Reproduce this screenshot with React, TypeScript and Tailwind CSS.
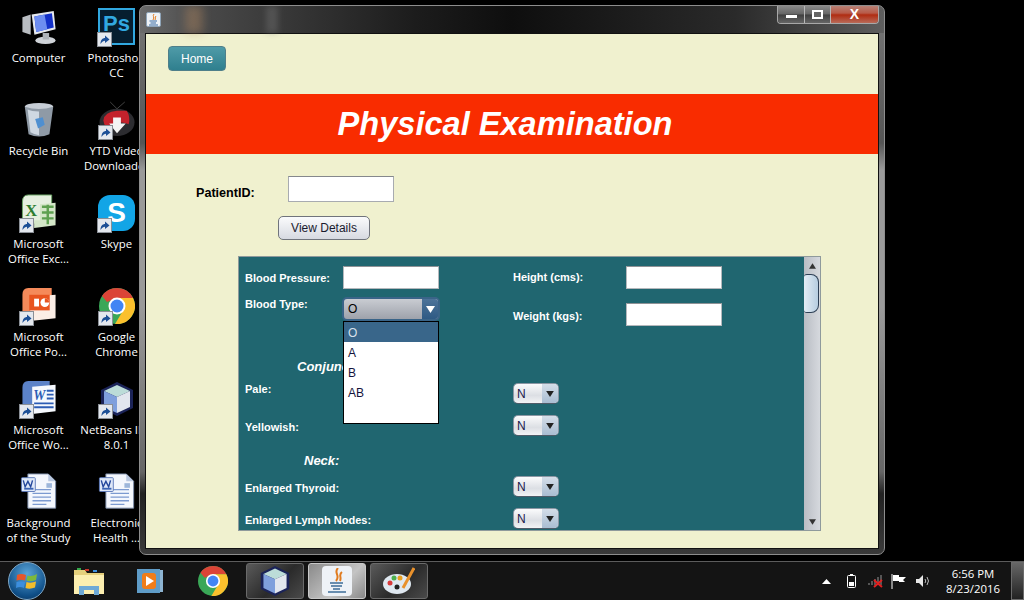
import type { ReactNode } from "react";

const sans = "font-['Open_Sans',sans-serif]";
const arial = "font-['Liberation_Sans',Arial,sans-serif]";

function ShortcutArrow() {
  return (
    <span className="absolute left-[-1px] bottom-[-2px] flex h-[15px] w-[15px] items-center justify-center border border-[#8a8f96] bg-[#e4e8ee]">
      <svg width="11" height="11" viewBox="0 0 11 11">
        <path d="M1.5 10 C1.5 6 3.5 4 6 4 V1.5 L10.5 5.5 L6 9 V6.8 C4.5 6.8 3 7.8 1.5 10 Z" fill="#1c4f96" />
      </svg>
    </span>
  );
}

function ChromeIcon({ size = 36 }: { size?: number }) {
  return (
    <svg width={size} height={size} viewBox="0 0 36 36">
      <circle cx="18" cy="18" r="18" fill="#3aa757" />
      <path d="M18 0 A18 18 0 0 1 34 10 L18 10 L8 14 L3 8 A18 18 0 0 1 18 0 Z" fill="#db4437" />
      <path d="M34 10 A18 18 0 0 1 16 36 L25 21 L18 10 Z" fill="#fbc02d" />
      <circle cx="18" cy="18" r="8.5" fill="#fff" />
      <circle cx="18" cy="18" r="6.5" fill="#4285f4" />
    </svg>
  );
}

function CubeIcon({ size = 36 }: { size?: number }) {
  return (
    <svg width={size} height={size} viewBox="0 0 36 36">
      <path d="M18 1 L34 9 V27 L18 35 L2 27 V9 Z" fill="#1b2358" />
      <path d="M18 4 L31 10 L18 16 L5 10 Z" fill="#bcdcd8" />
      <path d="M5 10 L18 16 V32 L5 26 Z" fill="#7f9fdc" />
      <path d="M31 10 L18 16 V32 L31 26 Z" fill="#e2e6ee" />
    </svg>
  );
}

function WordDoc() {
  return (
    <svg width="38" height="37" viewBox="0 0 40 40">
      <path d="M8 1 H30 L38 9 V38 H8 Z" fill="#f4f7fd" stroke="#7b8ba8" />
      <path d="M30 1 V9 H38 Z" fill="#b9c8e0" />
      <path d="M13 18 H33 M13 22 H33 M13 26 H33 M13 30 H33 M13 34 H28" stroke="#7c9ad0" strokeWidth="1.4" />
      <rect x="28" y="11" width="6" height="5" fill="#9db6da" />
      <rect x="1" y="5" width="15" height="15" rx="1" fill="#dfe8f8" stroke="#5b78b8" />
      <path d="M3 8 L5 15 L8 9 L11 15 L13 8" fill="none" stroke="#24479c" strokeWidth="1.5" />
      <rect x="4" y="16" width="10" height="2" fill="#3c64b4" />
    </svg>
  );
}

const desktopIcons: { lines: string[]; icon: ReactNode; shortcut?: boolean }[] = [
  {
    lines: ["Computer"],
    icon: (
      <svg width="38" height="35" viewBox="0 0 40 38">
        <path d="M2 8 L11 5 V27 L2 24 Z" fill="#b9bdc2" />
        <path d="M12 5 L36 1 L38 21 L15 27 Z" fill="#e6e9ee" />
        <path d="M15 7 L34 3.5 L36 19 L17 24 Z" fill="#1330c8" />
        <path d="M15 7 L26 5 L29 21 L17 24 Z" fill="#6d8df0" />
        <ellipse cx="27" cy="33" rx="11" ry="4" fill="#cfd3d8" />
        <rect x="24" y="25" width="7" height="7" fill="#aeb3b9" />
      </svg>
    ),
  },
  {
    lines: ["Photoshop", "CC"],
    shortcut: true,
    icon: (
      <span className={`flex h-[37px] w-[37px] items-start justify-center border-2 border-[#31a8e0] bg-[#061e2f] pt-[3px] text-[22px] font-bold leading-none text-[#31a8e0] ${arial}`}>
        Ps
      </span>
    ),
  },
  {
    lines: ["Recycle Bin"],
    icon: (
      <svg width="32" height="36" viewBox="0 0 32 38">
        <ellipse cx="16" cy="5" rx="15" ry="4" fill="#c7ced6" />
        <path d="M1 5 L5 34 Q16 39 27 34 L31 5 Q16 10 1 5 Z" fill="#8f9aa6" />
        <path d="M4 8 L7 32 Q12 35 16 35 L16 10 Q8 10 4 8 Z" fill="#cfd8e2" />
        <path d="M12 18 L20 16 L22 24 L15 28 Z" fill="#4f8fd0" />
      </svg>
    ),
  },
  {
    lines: ["YTD Video", "Downloader"],
    shortcut: true,
    icon: (
      <svg width="36" height="37" viewBox="0 0 36 38">
        <path d="M11 1 L18 8 L26 1" stroke="#444" fill="none" />
        <ellipse cx="18" cy="22" rx="18" ry="14" fill="#2c2c30" />
        <path d="M4 20 Q5 11 18 10 H28 Q32 16 30 24 Q18 18 12 30 Q5 28 4 20 Z" fill="#c3222c" />
        <path d="M14 17 H22 V23 H27 L18 33 L10 23 H14 Z" fill="#f4f4f4" />
      </svg>
    ),
  },
  {
    lines: ["Microsoft", "Office Exc..."],
    shortcut: true,
    icon: (
      <svg width="38" height="37" viewBox="0 0 38 38">
        <path d="M8 1 H32 V30 H2 V8 Q2 1 8 1 Z" fill="#e6efe0" stroke="#6ea868" />
        <path d="M14 11 L36 9 V32 L14 35 Z" fill="#d4e6c8" />
        <path d="M4 9 H20 V27 H4 Z" fill="#e6efe0" />
        <text x="5" y="23" fontSize="17" fontWeight="700" fill="#2f7d32" fontFamily="Liberation Serif">X</text>
        <path d="M22 13 H34 M22 19 H34 M22 25 H34 M28 11 V31" stroke="#5ea050" strokeWidth="2.5" />
      </svg>
    ),
  },
  {
    lines: ["Skype"],
    shortcut: true,
    icon: (
      <span className={`flex h-[36px] w-[37px] items-center justify-center rounded-[12px] bg-[#12a5e6] text-[28px] font-bold leading-none text-white ${arial}`}>
        S
      </span>
    ),
  },
  {
    lines: ["Microsoft", "Office Po..."],
    shortcut: true,
    icon: (
      <svg width="38" height="37" viewBox="0 0 38 38">
        <path d="M8 1 H32 V30 H2 V8 Q2 1 8 1 Z" fill="#f58a5a" />
        <path d="M10 10 L36 8 V32 L10 35 Z" fill="#fbeee6" />
        <path d="M9 8 H30 V24 H9 Z" fill="#e8541f" />
        <path d="M14 12 H19 V20 H14 Z" fill="#fff" />
        <circle cx="25" cy="16" r="4.5" fill="#fff" />
        <path d="M25 16 V11.5 A4.5 4.5 0 0 1 29.5 16 Z" fill="#e8541f" />
      </svg>
    ),
  },
  { lines: ["Google", "Chrome"], shortcut: true, icon: <ChromeIcon /> },
  {
    lines: ["Microsoft", "Office Wo..."],
    shortcut: true,
    icon: (
      <svg width="38" height="37" viewBox="0 0 38 38">
        <path d="M8 1 H30 V30 H2 V8 Q2 1 8 1 Z" fill="#5b82c8" />
        <path d="M12 7 L36 5 V32 L12 35 Z" fill="#f5f8fd" />
        <text x="13" y="21" fontSize="14" fontWeight="700" fontStyle="italic" fill="#2c5cb4" fontFamily="Liberation Serif">W</text>
        <path d="M27 11 H34 M27 15 H34 M27 19 H34 M14 24 H34 M14 28 H34" stroke="#2c5cb4" strokeWidth="2" />
      </svg>
    ),
  },
  { lines: ["NetBeans IDE", "8.0.1"], shortcut: true, icon: <CubeIcon /> },
  { lines: ["Background", "of the Study"], icon: <WordDoc /> },
  { lines: ["Electronic", "Health ..."], icon: <WordDoc /> },
];

function DesktopIcon({ lines, icon, shortcut }: { lines: string[]; icon: ReactNode; shortcut?: boolean }) {
  return (
    <div className="flex h-[93px] w-[77px] flex-col items-center">
      <div className="relative flex h-[37px] items-end justify-center">
        {icon}
        {shortcut && <ShortcutArrow />}
      </div>
      <div className={`mt-[5px] text-center text-[11.4px] leading-[15px] whitespace-nowrap text-white ${sans}`}>
        {lines.map((l) => (
          <div key={l}>{l}</div>
        ))}
      </div>
    </div>
  );
}

function Combo({ className = "" }: { className?: string }) {
  return (
    <div className={`flex h-[21px] w-[46px] overflow-hidden rounded-[5px] border border-[#8c97a4] border-b-[#4f5b68] bg-[linear-gradient(#fbfbfc,#dcdfe4_60%,#f2f3f5)] ${className}`}>
      <span className={`flex-1 pl-[3px] text-[12px] leading-[20px] text-[#1a1a4a] ${arial}`}>N</span>
      <span className="flex w-[16px] items-center justify-center bg-[linear-gradient(#d4dde8,#a9bdd2)]">
        <svg width="8" height="6" viewBox="0 0 9 7">
          <path d="M0 0 H9 L4.5 7 Z" fill="#222" />
        </svg>
      </span>
    </div>
  );
}

function Label({ children, className = "" }: { children: ReactNode; className?: string }) {
  return <div className={`text-[11px] leading-[14px] font-bold whitespace-nowrap text-white ${arial} ${className}`}>{children}</div>;
}

function Field({ className = "" }: { className?: string }) {
  return <div className={`h-[23px] w-[96px] border border-[#b5b8bc] border-t-[#8f9296] bg-white ${className}`} />;
}

function Section({ children, className = "" }: { children: ReactNode; className?: string }) {
  return <div className={`text-[13px] leading-[15px] font-bold italic whitespace-nowrap text-white ${arial} ${className}`}>{children}</div>;
}

function BloodTypeMenu() {
  return (
    <div className={`absolute left-[104px] top-[64px] h-[103px] w-[96px] border border-black bg-white text-[12px] text-[#14143c] ${arial}`}>
      <div className="h-[20px] bg-[#39668a] pl-[4px] leading-[22px] text-[#d6e0ea]">O</div>
      <div className="h-[20px] pl-[4px] leading-[22px]">A</div>
      <div className="h-[20px] pl-[4px] leading-[22px]">B</div>
      <div className="h-[20px] pl-[4px] leading-[22px]">AB</div>
    </div>
  );
}

function ScrollPanel() {
  return (
    <div className="ml-[92px] mt-[16px] flex h-[275px] w-[583px] border border-[#8f9a9c] bg-[#206670]">
      <div className="relative flex flex-1 overflow-hidden pl-[6px]">
        <div className="w-[268px]">
          <div className="mt-[9px] flex items-center">
            <Label className="w-[98px]">Blood Pressure:</Label>
            <Field />
          </div>
          <div className="mt-[8px] flex items-start">
            <Label className="w-[97px]">Blood Type:</Label>
            <div className="flex h-[24px] w-[98px] overflow-hidden rounded-[5px] border-2 border-[#3a6488] bg-[linear-gradient(#c9ccd2,#9ea2ab)]">
              <span className={`flex-1 pl-[4px] text-[12px] leading-[21px] text-black ${arial}`}>O</span>
              <span className="flex w-[16px] items-center justify-center bg-[linear-gradient(#4d7399,#2f5a84)]">
                <svg width="9" height="7" viewBox="0 0 9 7">
                  <path d="M0 0 H9 L4.5 7 Z" fill="#fff" />
                </svg>
              </span>
            </div>
          </div>
          <Section className="ml-[52px] mt-[38px]">Conjunctiva:</Section>
          <Label className="mt-[8px]">Pale:</Label>
          <Label className="mt-[24px]">Yellowish:</Label>
          <Section className="ml-[59px] mt-[19px]">Neck:</Section>
          <Label className="mt-[13px]">Enlarged Thyroid:</Label>
          <Label className="mt-[18px]">Enlarged Lymph Nodes:</Label>
        </div>
        <div>
          <div className="mt-[9px] flex items-center">
            <Label className="mb-[2px] w-[113px]">Height (cms):</Label>
            <Field />
          </div>
          <div className="mt-[14px] flex items-center">
            <Label className="mt-[3px] w-[113px]">Weight (kgs):</Label>
            <Field />
          </div>
          <Combo className="mt-[57px]" />
          <Combo className="mt-[11px]" />
          <Combo className="mt-[40px]" />
          <Combo className="mt-[11px]" />
        </div>
        <BloodTypeMenu />
      </div>
      <div className="flex w-[16px] flex-col bg-[linear-gradient(90deg,#b9bdc4,#d6d9de)]">
        <div className="flex h-[17px] items-center justify-center">
          <svg width="7" height="6" viewBox="0 0 9 7">
            <path d="M0 7 H9 L4.5 0 Z" fill="#333" />
          </svg>
        </div>
        <div className="h-[39px] w-[15px] rounded-r-[8px] rounded-l-[3px] border border-l-0 border-[#2d3f55] bg-[linear-gradient(90deg,#e4edf5,#b7cde0)]" />
        <div className="flex-1" />
        <div className="flex h-[17px] items-center justify-center">
          <svg width="7" height="6" viewBox="0 0 9 7">
            <path d="M0 0 H9 L4.5 7 Z" fill="#333" />
          </svg>
        </div>
      </div>
    </div>
  );
}

function AppWindow() {
  return (
    <div className="absolute left-[139px] top-[5px] flex h-[550px] w-[746px] flex-col overflow-hidden rounded-[7px] border border-[#8d8d8d] bg-[linear-gradient(#777,#555_25%,#9a9a9a_30%,#9a9a9a_55%,#666_85%,#222_89%,#3a3a3a)]">
      {/* glass title bar */}
      <div className="relative flex h-[27px] shrink-0 items-center bg-[linear-gradient(90deg,#6a6a6a,#4a4a4a_8%,#1c1c1c_37%,#0e0e0e_50%,#2a2a2a_80%,#5e5e5e)] pl-[6px]">
        <div className="absolute left-[45px] top-0 h-[27px] w-[18px] bg-[#b58a62] opacity-40 blur-[4px]" />
        <div className="absolute left-[126px] top-0 h-[27px] w-[12px] bg-[#777] opacity-40 blur-[3px]" />
        <span className="relative flex h-[15px] w-[15px] items-center justify-center rounded-[2px] border border-[#8fa4b8] bg-[#eef2f6]">
          <svg width="11" height="12" viewBox="0 0 11 12">
            <path d="M6 0 C4 2 7 3 5 6 M8 2 C6.5 3.5 8 4.5 7 6" stroke="#e07b1f" fill="none" />
            <path d="M1.5 7 H9 M2.5 9 H8 M1 11 H10" stroke="#3a6aa0" />
          </svg>
        </span>
        <div className="absolute right-[5px] top-[-1px] flex h-[19px] overflow-hidden rounded-b-[4px] border border-t-0 border-[#a8a8a8]">
          <span className="flex w-[27px] items-center justify-center border-r border-[#b8b8b8] bg-[linear-gradient(#8e8e8e,#666_50%,#3f3f3f_55%,#666)]">
            <span className="mt-[5px] h-[3px] w-[11px] bg-white" />
          </span>
          <span className="flex w-[26px] items-center justify-center border-r border-[#b8b8b8] bg-[linear-gradient(#8e8e8e,#666_50%,#3f3f3f_55%,#666)]">
            <span className="h-[9px] w-[11px] border-2 border-white bg-[#666]" />
          </span>
          <span className={`flex w-[47px] items-center justify-center bg-[linear-gradient(#b8877c,#b85a48_45%,#b02c12_55%,#b86a58)] text-[14px] font-bold leading-none text-white ${arial}`}>
            X
          </span>
        </div>
      </div>

      {/* client area */}
      <div className="mx-[5px] h-[516px] shrink-0 border border-[#111] bg-[#f0f1cf]">
        <div className="h-[60px] pl-[22px] pt-[12px]">
          <button className={`block h-[25px] w-[58px] rounded-[4px] border border-[#4f7f8a] bg-[linear-gradient(#4f9ba8,#2f7f8e)] text-[12px] text-white ${arial}`}>
            Home
          </button>
        </div>
        <div className={`flex h-[60px] items-center justify-center bg-[#f92c00] pr-[14px] text-[32.6px] font-bold italic text-white ${arial}`}>
          Physical Examination
        </div>
        <div className="ml-[50px] mt-[22px] flex items-center">
          <div className={`w-[92px] pt-[8px] text-[12.6px] leading-[18px] font-bold text-black ${arial}`}>PatientID:</div>
          <div className="h-[26px] w-[106px] border border-[#a8abb0] border-t-[#85888c] bg-white" />
        </div>
        <button className={`ml-[132px] mt-[14px] block h-[24px] w-[92px] rounded-[5px] border border-[#70747c] bg-[linear-gradient(#fafbfc,#d7dae1)] text-[12px] text-[#1a1a2e] ${arial}`}>
          View Details
        </button>
        <ScrollPanel />
      </div>
    </div>
  );
}

function TaskButton({ children, active }: { children: ReactNode; active?: boolean }) {
  return (
    <div
      className={`flex h-[36px] w-[58px] items-center justify-center rounded-[3px] border ${
        active ? "border-[#c8c8c8] bg-[linear-gradient(135deg,#8a8a8a,#c4c4c4_60%,#888)]" : "border-[#6a6a6a] bg-[linear-gradient(135deg,#5a5a5a,#2a2a2a_55%,#4a4a4a)]"
      }`}
    >
      {children}
    </div>
  );
}

function Taskbar() {
  return (
    <div className="absolute bottom-0 left-0 flex h-[39px] w-[1024px] items-center border-t border-[#5c5c5c] bg-[#141414]">
      <div className="ml-[8px] flex h-[38px] w-[38px] items-center justify-center rounded-full border border-[#7fa8c8] bg-[radial-gradient(circle_at_50%_30%,#5aa4d8,#0f4f88_70%,#0a2f55)]">
        <svg width="22" height="20" viewBox="0 0 22 20">
          <path d="M1 4 Q5 2 10 4 L9 9.5 Q5 8 0.5 9.5 Z" fill="#e8562a" />
          <path d="M11.5 4.5 Q16 6 21 3 L20 9 Q16 11 10.5 9.5 Z" fill="#7db93c" />
          <path d="M0.5 11 Q5 9.5 9 11 L8 17 Q4 15 0 17 Z" fill="#3c8ede" />
          <path d="M10.5 11 Q15 12.5 20 10.5 L19 16.5 Q14 18.5 9.5 17 Z" fill="#f5bd2b" />
        </svg>
      </div>
      <div className="ml-[27px] flex w-[32px] justify-center">
        <svg width="32" height="30" viewBox="0 0 32 30">
          <path d="M1 4 H12 L14 7 H31 V28 H1 Z" fill="#e4cf7c" />
          <path d="M1 9 H31 V28 H1 Z" fill="#fbeeb0" />
          <path d="M6 20 H26 V29 H21 V24 H11 V29 H6 Z" fill="#6ea9d6" />
          <rect x="4" y="2" width="4" height="2" fill="#35a84a" />
          <rect x="12" y="3" width="4" height="2" fill="#c8352a" />
          <rect x="20" y="4" width="4" height="2" fill="#3c8ede" />
        </svg>
      </div>
      <div className="ml-[31px] flex w-[28px] justify-center">
        <svg width="28" height="26" viewBox="0 0 28 26">
          <rect x="5" y="2" width="22" height="22" fill="#8db4d2" />
          <rect x="1" y="1" width="23" height="24" fill="#5f9cc8" />
          <rect x="6" y="5" width="14" height="16" rx="3" fill="#ef7d1a" />
          <path d="M10 8 L18 13 L10 18 Z" fill="#fff" />
        </svg>
      </div>
      <div className="ml-[34px] flex w-[30px] justify-center">
        <ChromeIcon size={30} />
      </div>
      <div className="ml-[18px] flex gap-[4px]">
        <TaskButton>
          <CubeIcon size={32} />
        </TaskButton>
        <TaskButton active>
          <span className="flex h-[30px] w-[30px] items-center justify-center rounded-[4px] bg-[#eef2f7]">
            <svg width="22" height="26" viewBox="0 0 22 26">
              <path d="M12 0 C7 5 15 7 10 13 M16 4 C12 7 16 9 14 13" stroke="#e07b1f" strokeWidth="2" fill="none" />
              <path d="M4 15 H17 M5 18 H16 M7 21 H14 M2 24 H20" stroke="#3d6c98" strokeWidth="1.5" />
            </svg>
          </span>
        </TaskButton>
        <TaskButton>
          <svg width="32" height="30" viewBox="0 0 32 30">
            <ellipse cx="14" cy="18" rx="14" ry="10" fill="#dfe8f0" />
            <circle cx="7" cy="17" r="2.5" fill="#d83a3a" />
            <circle cx="11" cy="12" r="2.5" fill="#4fb04f" />
            <circle cx="17" cy="12" r="2.5" fill="#e8a020" />
            <circle cx="14" cy="21" r="2.5" fill="#222" />
            <path d="M31 2 L20 22" stroke="#e8912c" strokeWidth="3" />
          </svg>
        </TaskButton>
      </div>
      <div className="ml-[394px] flex items-center">
        <svg width="9" height="5" viewBox="0 0 9 5">
          <path d="M0 5 H9 L4.5 0 Z" fill="#fff" />
        </svg>
        <svg className="ml-[16px]" width="9" height="14" viewBox="0 0 9 14">
          <rect x="0.5" y="1.5" width="8" height="12" rx="1" fill="none" stroke="#fff" />
          <rect x="3" y="0" width="3" height="1.5" fill="#fff" />
          <rect x="2" y="8" width="5" height="4" fill="#fff" />
        </svg>
        <svg className="ml-[12px]" width="16" height="14" viewBox="0 0 16 14">
          <path d="M1 9 V11 M4 7 V11 M7 5 V11 M10 3 V11 M13 1 V11" stroke="#555" strokeWidth="2" />
          <path d="M6 6 L14 13 M14 6 L6 13" stroke="#e02020" strokeWidth="2" />
        </svg>
        <svg className="ml-[7px]" width="15" height="15" viewBox="0 0 15 15">
          <path d="M1 0 V15" stroke="#fff" />
          <path d="M2 1 H8 V3 H15 L12 6 L14 8 H8 V7 H2 Z" fill="#fff" />
        </svg>
        <svg className="ml-[10px]" width="15" height="14" viewBox="0 0 15 14">
          <path d="M0 5 H3 L7 1 V13 L3 9 H0 Z" fill="#e8e8e8" />
          <path d="M9 5 Q10.5 7 9 9 M11 3 Q14 7 11 11" stroke="#bbb" fill="none" />
        </svg>
      </div>
      <div className={`ml-[14px] w-[56px] text-center text-[11.4px] leading-[15px] text-white ${sans}`}>
        <div>6:56 PM</div>
        <div>8/23/2016</div>
      </div>
      <div className="ml-auto h-[38px] w-[13px] border border-[#6a6a6a] bg-[linear-gradient(#666,#222)]" />
    </div>
  );
}

export default function App() {
  return (
    <div className="relative h-[600px] w-[1024px] overflow-hidden bg-black">
      <div className="grid w-[155px] grid-cols-[78px_77px] pt-[8px]">
        {desktopIcons.map((d) => (
          <DesktopIcon key={d.lines.join(" ")} {...d} />
        ))}
      </div>
      <AppWindow />
      <Taskbar />
    </div>
  );
}
